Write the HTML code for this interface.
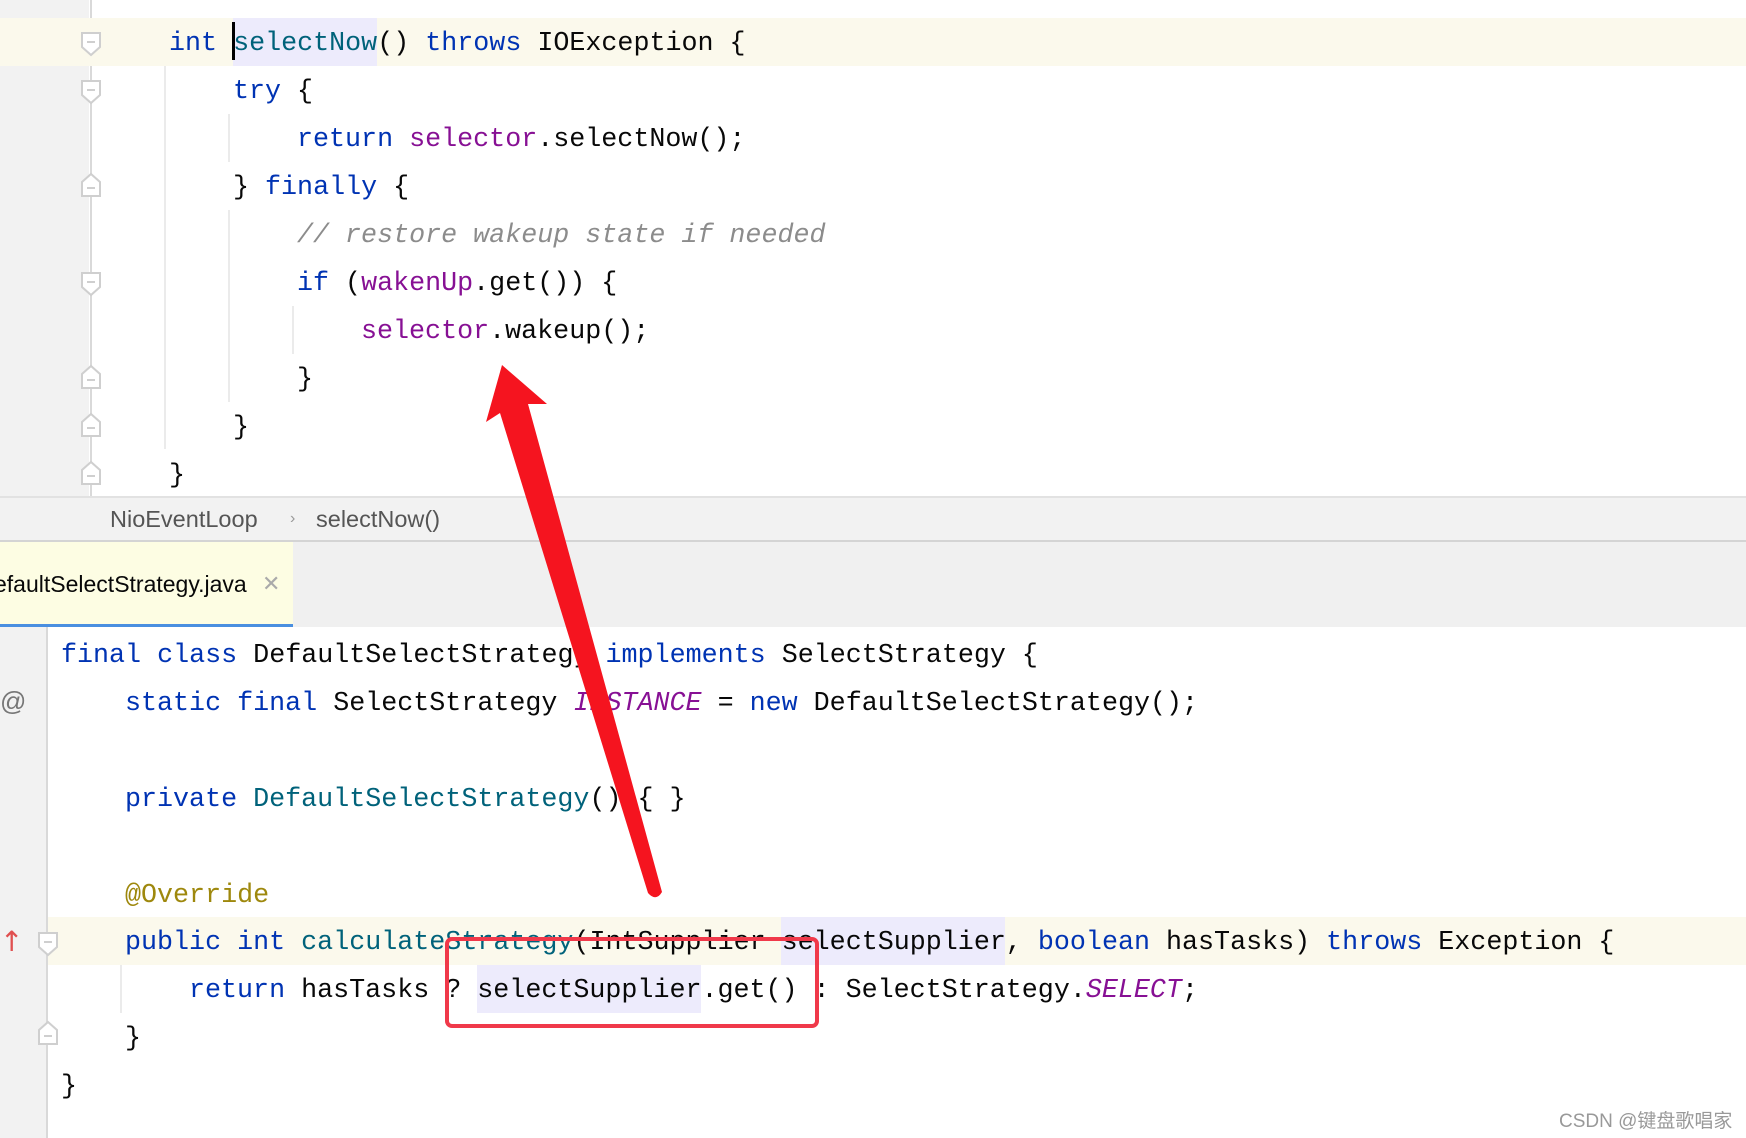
<!DOCTYPE html>
<html><head><meta charset="utf-8"><style>
*{margin:0;padding:0;box-sizing:border-box}
body{width:1746px;height:1138px;position:relative;overflow:hidden;background:#fff;font-family:"Liberation Mono",monospace;font-size:26.7px;color:#080808}
.a{position:absolute}
.l{position:absolute;height:48px;line-height:48px;white-space:pre;margin-top:2px}
.k{color:#0033b3}.f{color:#871094}.m{color:#00627a}.c{color:#8c8c8c;font-style:italic}.an{color:#9e880d}.i{font-style:italic}
.g{position:absolute;width:2px;background:#ebebeb}
</style></head><body>
<div class="a" style="left:0;top:0;width:89px;height:496px;background:#f2f2f2"></div>
<div class="a" style="left:90px;top:0;width:2px;height:496px;background:#d9d9d9"></div>
<div class="a" style="left:0;top:18px;width:1746px;height:48px;background:#fbf9ec"></div>
<div class="a" style="left:233px;top:18px;width:144px;height:48px;background:#edebfc"></div>
<div class="a" style="left:232px;top:22px;width:3px;height:38px;background:#000"></div>
<div class="g" style="left:164px;top:66px;height:383px"></div>
<div class="g" style="left:228px;top:114px;height:48px"></div>
<div class="g" style="left:228px;top:210px;height:192px"></div>
<div class="g" style="left:292px;top:306px;height:48px"></div>
<svg class="a" style="left:80px;top:0" width="22" height="496" fill="#fff" stroke="#cfcfcf" stroke-width="2">
<path d="M2 33h18v14l-9 8-9-8z"/><path d="M7 42h8"/>
<path d="M2 81h18v14l-9 8-9-8z"/><path d="M7 90h8"/>
<path d="M2 196h18v-14l-9-8-9 8z"/><path d="M7 188h8"/>
<path d="M2 273h18v14l-9 8-9-8z"/><path d="M7 282h8"/>
<path d="M2 388h18v-14l-9-8-9 8z"/><path d="M7 380h8"/>
<path d="M2 436h18v-14l-9-8-9 8z"/><path d="M7 428h8"/>
<path d="M2 484h18v-14l-9-8-9 8z"/><path d="M7 476h8"/>
</svg>
<div class="l" style="left:169px;top:18px"><span class="k">int</span> <span class="m">selectNow</span>() <span class="k">throws</span> IOException {</div>
<div class="l" style="left:233px;top:66px"><span class="k">try</span> {</div>
<div class="l" style="left:297px;top:114px"><span class="k">return</span> <span class="f">selector</span>.selectNow();</div>
<div class="l" style="left:233px;top:162px">} <span class="k">finally</span> {</div>
<div class="l c" style="left:297px;top:210px">// restore wakeup state if needed</div>
<div class="l" style="left:297px;top:258px"><span class="k">if</span> (<span class="f">wakenUp</span>.get()) {</div>
<div class="l" style="left:361px;top:306px"><span class="f">selector</span>.wakeup();</div>
<div class="l" style="left:297px;top:354px">}</div>
<div class="l" style="left:233px;top:402px">}</div>
<div class="l" style="left:169px;top:450px">}</div>
<div class="a" style="left:0;top:496px;width:1746px;height:46px;background:#f2f2f2;border-top:2px solid #e2e2e2;border-bottom:2px solid #d4d4d4;font-family:'Liberation Sans',sans-serif;font-size:23.5px;color:#555;line-height:42px">
<span class="a" style="left:110px">NioEventLoop</span><span class="a" style="left:290px;color:#999;font-size:16px">›</span><span class="a" style="left:316px">selectNow()</span></div>
<div class="a" style="left:0;top:542px;width:1746px;height:85px;background:#f0f0f0"></div>
<div class="a" style="left:0;top:542px;width:293px;height:85px;background:#fdfde3;border-bottom:3px solid #4a8fe0;font-family:'Liberation Sans',sans-serif;font-size:23px;line-height:84px;white-space:nowrap;overflow:hidden"><span class="a" style="left:-6px">efaultSelectStrategy.java</span><span class="a" style="left:262px;color:#aaa;font-size:22px">✕</span></div>
<div class="a" style="left:0;top:627px;width:47px;height:511px;background:#f2f2f2"></div>
<div class="a" style="left:46px;top:627px;width:2px;height:511px;background:#d9d9d9"></div>
<div class="a" style="left:48px;top:917px;width:1698px;height:48px;background:#fbf9ec"></div>
<div class="a" style="left:781px;top:917px;width:224px;height:48px;background:#edebfc"></div>
<div class="a" style="left:477px;top:965px;width:224px;height:48px;background:#edebfc"></div>
<div class="g" style="left:120px;top:965px;height:48px"></div>
<div class="a" style="left:0;top:686px;font-family:'Liberation Sans',sans-serif;font-size:26px;color:#777">@</div>
<div class="a" style="left:0;top:925px;color:#e05050;font-size:28px;font-family:'DejaVu Sans',sans-serif">↑</div>
<svg class="a" style="left:37px;top:927px" width="22" height="120" fill="#fff" stroke="#cfcfcf" stroke-width="2">
<path d="M2 6h18v14l-9 8-9-8z"/><path d="M7 15h8"/>
<path d="M2 117h18v-14l-9-8-9 8z"/><path d="M7 109h8"/>
</svg>
<div class="l" style="left:61px;top:630px"><span class="k">final class</span> DefaultSelectStrategy <span class="k">implements</span> SelectStrategy {</div>
<div class="l" style="left:125px;top:678px"><span class="k">static final</span> SelectStrategy <span class="f i">INSTANCE</span> = <span class="k">new</span> DefaultSelectStrategy();</div>
<div class="l" style="left:125px;top:774px"><span class="k">private</span> <span class="m">DefaultSelectStrategy</span>() { }</div>
<div class="l an" style="left:125px;top:870px">@Override</div>
<div class="l" style="left:125px;top:917px"><span class="k">public int</span> <span class="m">calculateStrategy</span>(IntSupplier selectSupplier, <span class="k">boolean</span> hasTasks) <span class="k">throws</span> Exception {</div>
<div class="l" style="left:189px;top:965px"><span class="k">return</span> hasTasks ? selectSupplier.get() : SelectStrategy.<span class="f i">SELECT</span>;</div>
<div class="l" style="left:125px;top:1013px">}</div>
<div class="l" style="left:61px;top:1061px">}</div>
<div class="a" style="left:445px;top:937px;width:374px;height:91px;border:4px solid #f0394a;border-radius:7px"></div>
<svg class="a" style="left:0;top:0" width="1746" height="1138">
<path d="M502 365 L547 404 L528 404 L662 892 Q656 902 648 893 L500 413 L486 422 Z" fill="#f5141f"/>
</svg>
<div class="a" style="left:1559px;top:1106px;font-family:'Liberation Sans','Noto Sans CJK SC',sans-serif;font-size:19px;color:#999">CSDN @键盘歌唱家</div>
</body></html>
